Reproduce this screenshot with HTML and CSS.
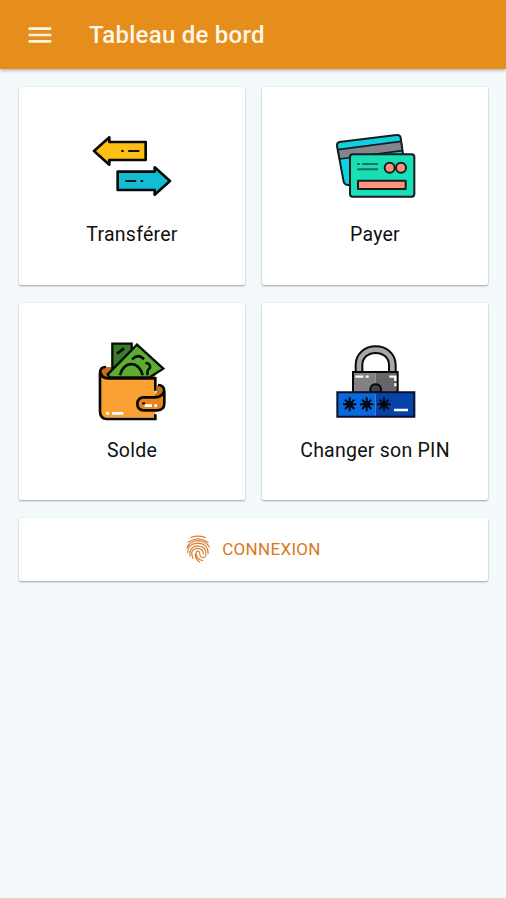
FILE: index.html
```html
<!DOCTYPE html>
<html lang="fr">
<head>
<meta charset="utf-8">
<title>Tableau de bord</title>
<link rel="stylesheet" href="styles.css">
</head>
<body>
<header class="bar">
  <svg class="menu" viewBox="0 0 24 18"><path d="M.5 2.7h22.8M.5 9h22.8M.5 15.3h22.8"/></svg>
  <h1 class="title">Tableau de bord</h1>
</header>
<main class="content">
  <div class="grid">
    <section class="card">
      <svg class="icon" viewBox="0 0 300 240">
        <g stroke="#080808" stroke-width="8" stroke-linejoin="round">
          <path fill="#fdc010" d="M36 78 82 37v14h109v54H82v14z"/>
          <path fill="#10bdd3" d="M264 168 218 127v13H107v55h111v14z"/>
        </g>
        <path stroke="#111" stroke-width="6" stroke-linecap="round" d="M120 78h3M141 78h29M132 168h28M178 168h3"/>
      </svg>
      <p class="label">Transférer</p>
    </section>
    <section class="card">
      <svg class="icon" viewBox="0 0 300 240">
        <g stroke="#171c20" stroke-width="6" stroke-linejoin="round">
          <path fill="#10d2df" d="M43 51 214 30q11-2 13 8l18 127-175 15q-12 0-14-10L36 63q-1-10 7-12z"/>
          <path fill="#85858d" stroke-width="5" d="m39 74 189-25 4 28L44 102z"/>
          <rect x="75" y="88" width="193" height="127" rx="8" fill="#18dfb6"/>
          <path fill="#fa9579" d="M99 167h143v25H99z"/>
          <circle cx="194" cy="128" r="15" fill="#fa9579"/><circle cx="228" cy="128" r="15" fill="#fa9579"/>
        </g>
        <path stroke="#13705f" stroke-width="6" d="M96 117h9M112 117h47M97 133h62"/>
      </svg>
      <p class="label">Payer</p>
    </section>
    <section class="card">
      <svg class="icon" viewBox="-12 18 300 240">
        <path fill="#c77019" d="M43 108q0-12 18-12h30l-10 35H55zM190 112h18v19h-30z"/>
        <path fill="#397c29" stroke="#090b06" stroke-width="7" d="M79 103V26h58v30z"/>
        <path fill="#5cad31" stroke="#090b06" stroke-width="7" d="m65 118 88-89 79 72-41 26H70z"/>
        <path fill="none" stroke="#090b06" stroke-width="8" d="m93 56 21-16M102 121c9-45 59-45 68 0M138 73q19-19 36 0M178 84q16 1 14 14-12 12-6 22"/>
        <path fill="#fba033" d="M42 111q5 19 18 19h148v118H61q-19 0-19-20z"/>
        <path fill="none" stroke="#080806" stroke-width="8" d="M60 96q-18-1-18 19v113q0 24 21 24h145v-14M42 108q4 22 24 22h142v37"/>
        <path fill="#c77019" d="M212 150q23-2 23 18v28h-30v-15q9-2 7-31z"/>
        <path fill="#e98420" d="M172 187h34q22 0 29-17v36q0 20-21 20h-42q-18-2-18-19 0-18 18-20z"/>
        <path fill="none" stroke="#080806" stroke-width="8" d="M216 150q19 0 19 20v35q0 21-21 21h-42q-18-2-18-19 0-18 18-20h34q22 0 28-18"/>
        <path fill="none" stroke="#080806" stroke-width="7" stroke-linecap="round" d="M172 205h2"/>
        <path fill="none" stroke="#fff" stroke-width="8" d="M60 235h9M78 235h34M176 212h22M205 212h8"/>
      </svg>
      <p class="label">Solde</p>
    </section>
    <section class="card">
      <svg class="icon" viewBox="-3 18 300 240">
        <path fill="none" stroke="#0a0a0b" stroke-width="26" d="M99 112V91c0-63 100-63 100 0v21"/>
        <path fill="none" stroke="#a8a8aa" stroke-width="14" d="M99 112V91c0-63 100-63 100 0v21"/>
        <path fill="#828285" d="M81 111h68v61H81z"/><path fill="#66666a" d="M149 111h66v61h-66z"/>
        <path fill="none" stroke="#09090a" stroke-width="6" d="M81 111h134v62H81z"/>
        <path fill="#454549" stroke="#09090a" stroke-width="6" d="M133 172v-9c0-20 32-20 32 0v9z"/>
        <path fill="#0868dc" d="M34 172h115v73H34z"/><path fill="#0743a8" d="M149 172h116v73H149z"/>
        <path fill="none" stroke="#071229" stroke-width="6" d="M34 172h231v73H34z"/>
        <g stroke="#050a16" stroke-width="6" fill="#050a16">
          <path id="star" d="M71 187v42M51 208h40M57 194l28 28M85 194l-28 28"/>
          <use href="#star" x="51"/><use href="#star" x="103"/>
          <circle cx="71" cy="208" r="7"/><circle cx="122" cy="208" r="7"/><circle cx="174" cy="208" r="7"/>
        </g>
        <path fill="none" stroke="#fff" stroke-width="7" d="M204 225h42M88 125h24M119 125h9M190 125h18v13M208 145v9"/>
      </svg>
      <p class="label">Changer son PIN</p>
    </section>
  </div>
  <button class="login">
    <svg class="finger" viewBox="0 0 24 28"><path d="M5 2.3q7-2.4 14 0M2 7.3q10-7 20 0M.8 13q3-7 11-7.4 8 0 11.4 6.4M1.7 17.5q0-9 10.3-9.3 10 .2 10.2 10.3M4 21q-1-10 8-10.2 8 .2 8 8.2 0 3.5-3 3.5-3 0-3.2-3.5-.3-3-1.8-3-2 0-1.8 3 .6 5.5 6.5 6.7M7 23.5q-4-9.8 5-10.2 5 0 5.5 5.7M9.2 19q.1 5.5 4.5 8"/></svg>
    <span>CONNEXION</span>
  </button>
</main>
</body>
</html>
```

FILE: styles.css
```css
* { box-sizing: border-box; }
body {
  margin: 0;
  height: 900px;
  display: flex;
  flex-direction: column;
  background: #f4f9fc;
  border-bottom: 2px solid #ecd2bd;
  font-family: Roboto, sans-serif;
}
.bar {
  height: 69px;
  flex: none;
  display: flex;
  align-items: center;
  padding: 1px 28px 0;
  gap: 37px;
  background: #e68e1c;
  box-shadow: 0 1px 4px rgba(0, 0, 0, .35);
}
.menu { width: 24px; height: 18px; stroke: #fff3e2; stroke-width: 2.7; }
.title {
  margin: 0;
  font-size: 24px;
  font-weight: 500;
  line-height: 30px;
  letter-spacing: .25px;
  color: #fff6ea;
}
.content { padding: 18px 18px 0 19px; }
.grid {
  display: grid;
  grid-template-columns: 226px 226px;
  grid-template-rows: 198px 197px;
  gap: 18px 17px;
}
.card, .login {
  background: #fff;
  border-radius: 2px;
  box-shadow: 0 1px 2px rgba(0, 0, 0, .34), 0 0 2px rgba(0, 0, 0, .08);
}
.card { display: flex; flex-direction: column; align-items: center; padding-top: 38px; }
.icon { width: 100px; height: 80px; flex: none; }
.label {
  margin: 18px 0 0;
  font-size: 19.5px;
  line-height: 24px;
  letter-spacing: .25px;
  color: #111;
  white-space: nowrap;
}
.login {
  width: 469px;
  height: 63px;
  margin-top: 18px;
  padding: 0 0 1px;
  border: 0;
  display: flex;
  align-items: center;
  justify-content: center;
  gap: 12px;
  font: 400 17px Roboto, sans-serif;
  letter-spacing: .3px;
  color: #d97918;
}
.finger { width: 24px; height: 28px; fill: none; stroke: #d9833a; stroke-width: 1.25; stroke-linecap: round; }
```
